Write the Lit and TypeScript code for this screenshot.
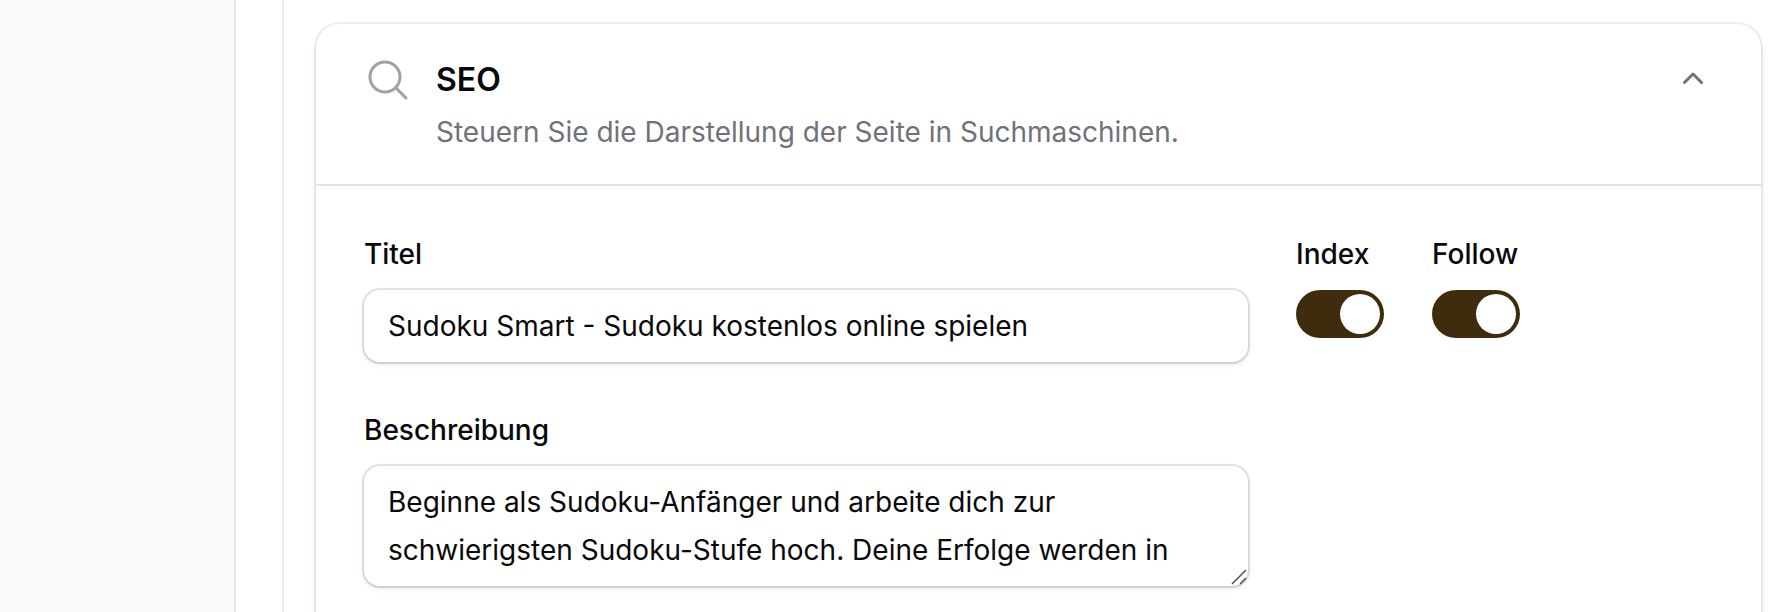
import { LitElement, html, css } from "lit";
import { customElement, property } from "lit/decorators.js";

@customElement("field-toggle")
class FieldToggle extends LitElement {
  @property() label = "";

  static styles = css`
    :host { display: block; }
    .label { font-weight: 500; line-height: 40px; color: #09090b; white-space: nowrap; }
    .track {
      display: flex; justify-content: flex-end; box-sizing: border-box;
      width: 88px; height: 48px; margin: 16px 0 0; padding: 4px;
      border: 0; border-radius: 24px; background: #3f2b0d;
    }
    .knob { width: 40px; height: 40px; border-radius: 50%; background: #fff; }
  `;

  render() {
    return html`
      <div class="label">${this.label}</div>
      <button class="track" role="switch" aria-checked="true" aria-label=${this.label}>
        <span class="knob"></span>
      </button>
    `;
  }
}

@customElement("app-root")
class AppRoot extends LitElement {
  static styles = css`
    :host {
      display: flex; height: 612px; overflow: hidden; background: #fff;
      font-family: Inter, sans-serif; font-size: 28px; color: #09090b;
      -webkit-font-smoothing: antialiased;
    }
    .sidebar {
      box-sizing: border-box; flex: none; width: 236px;
      background: #fafafa; border-right: 2px solid #e7e7e7;
    }
    .page { display: flex; flex: 1; min-width: 0; padding-left: 46px; }
    .panel { flex: 1; min-width: 0; border-left: 2px solid #eee; padding: 24px 19px 0 32px; }
    .card {
      height: 700px; border-radius: 24px; background: #fff;
      box-shadow: 0 0 0 2px rgba(9, 9, 11, 0.05), 0 2px 6px rgba(0, 0, 0, 0.1), 0 2px 4px -2px rgba(0, 0, 0, 0.1);
    }
    .header { display: flex; gap: 24px; padding: 32px 48px; }
    .search { flex: none; width: 48px; height: 48px; color: #a1a1aa; }
    .heading { flex: 1; display: grid; gap: 8px; }
    .title { margin: 0; font-size: 32px; line-height: 48px; font-weight: 600; }
    .subtitle { margin: 0; line-height: 40px; color: #71717a; }
    .chevron { flex: none; width: 40px; height: 40px; margin-top: 4px; color: #71717a; }
    .body { display: flex; gap: 48px; padding: 48px; border-top: 2px solid #e4e4e4; }
    .fields { display: grid; gap: 48px; align-content: start; width: 884px; }
    .field { display: grid; gap: 16px; }
    .label { font-weight: 500; line-height: 40px; }
    .control {
      position: relative; display: flex; border-radius: 16px; background: #fff;
      box-shadow: 0 0 0 2px rgba(9, 9, 11, 0.1), 0 2px 6px rgba(0, 0, 0, 0.1), 0 2px 4px -2px rgba(0, 0, 0, 0.1);
    }
    .input {
      box-sizing: border-box; width: 100%; margin: 0; border: 0; padding: 12px 24px;
      font: inherit; line-height: 48px; color: inherit; background: none;
      outline: 0; resize: none; overflow: hidden;
    }
    .line { height: 72px; }
    .area { height: 120px; }
    .grip { position: absolute; right: 0; bottom: 0; width: 18px; height: 18px; }
  `;

  render() {
    return html`
      <aside class="sidebar"></aside>
      <main class="page">
        <div class="panel">
          <section class="card">
            <header class="header">
              <svg class="search" viewBox="0 0 24 24" fill="none" stroke="currentColor" stroke-width="1.5" stroke-linecap="round" stroke-linejoin="round">
                <path d="m21 21-5.197-5.197m0 0A7.5 7.5 0 1 0 5.196 5.196a7.5 7.5 0 0 0 10.607 10.607Z" />
              </svg>
              <div class="heading">
                <h3 class="title">SEO</h3>
                <p class="subtitle">Steuern Sie die Darstellung der Seite in Suchmaschinen.</p>
              </div>
              <svg class="chevron" viewBox="0 0 20 20" fill="currentColor">
                <path fill-rule="evenodd" d="M9.47 6.47a.75.75 0 0 1 1.06 0l4.25 4.25a.75.75 0 1 1-1.06 1.06L10 8.06l-3.72 3.72a.75.75 0 0 1-1.06-1.06l4.25-4.25Z" />
              </svg>
            </header>
            <div class="body">
              <div class="fields">
                <div class="field">
                  <label class="label" for="title">Titel</label>
                  <div class="control">
                    <input class="input line" id="title" .value=${"Sudoku Smart - Sudoku kostenlos online spielen"} />
                  </div>
                </div>
                <div class="field">
                  <label class="label" for="description">Beschreibung</label>
                  <div class="control">
                    <textarea class="input area" id="description" spellcheck="false" .value=${"Beginne als Sudoku-Anfänger und arbeite dich zur schwierigsten Sudoku-Stufe hoch. Deine Erfolge werden in"}></textarea>
                    <svg class="grip" viewBox="0 0 18 18" fill="none" stroke="#505050" stroke-width="1.5">
                      <path d="M2 16 16 2M10 16l6-6" />
                    </svg>
                  </div>
                </div>
              </div>
              <field-toggle label="Index"></field-toggle>
              <field-toggle label="Follow"></field-toggle>
            </div>
          </section>
        </div>
      </main>
    `;
  }
}
